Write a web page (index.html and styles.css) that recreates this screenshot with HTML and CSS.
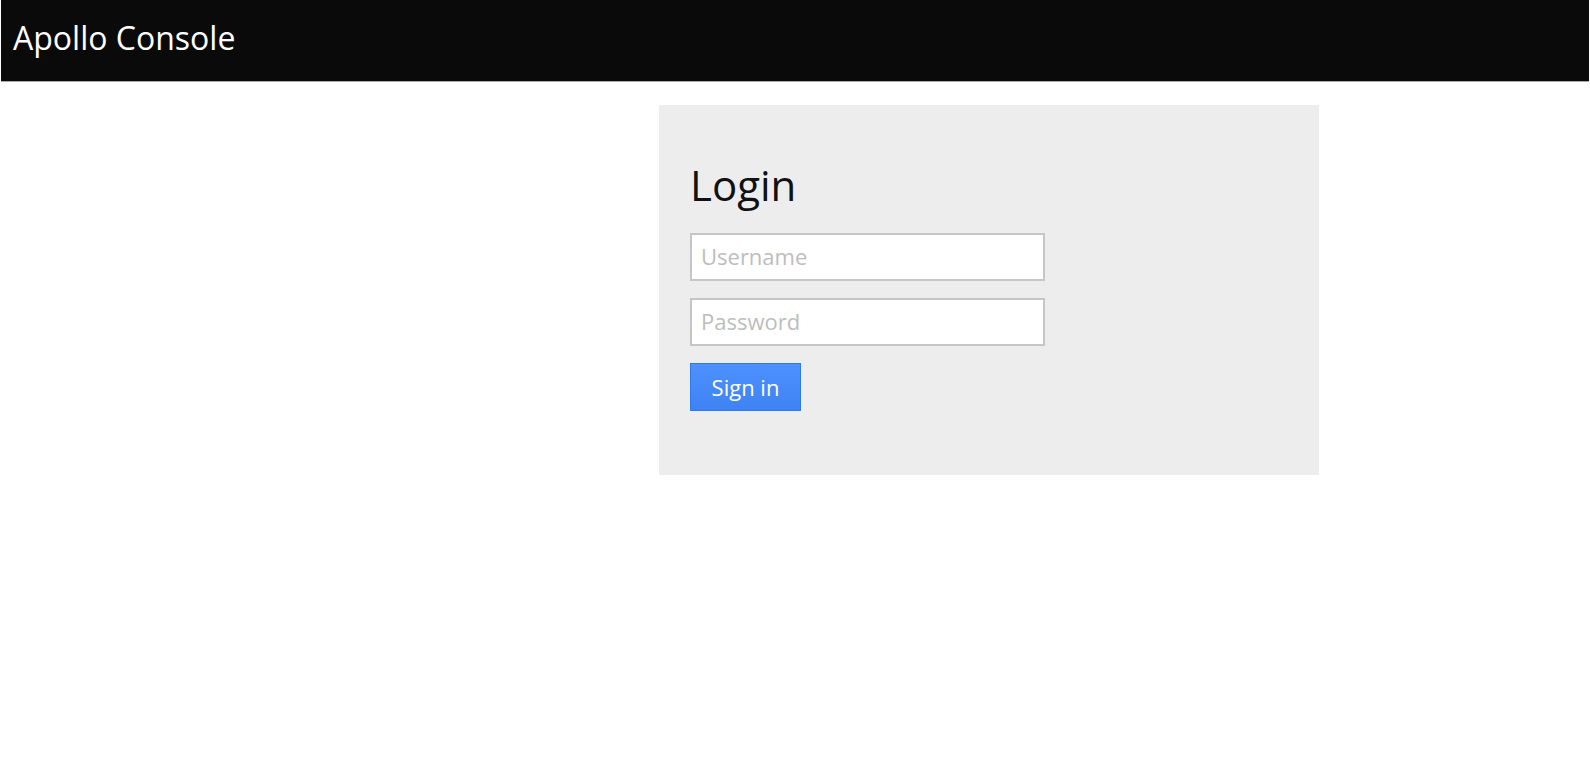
FILE: index.html
```html
<!DOCTYPE html>
<html lang="en">
<head>
<meta charset="utf-8">
<title>Apollo Console</title>
<link rel="stylesheet" href="styles.css">
</head>
<body>
<header class="topbar">
  <span class="brand">Apollo Console</span>
</header>
<main class="page">
  <section class="login-card">
    <h1 class="login-title">Login</h1>
    <form class="login-form">
      <input class="field" type="text" placeholder="Username">
      <input class="field" type="password" placeholder="Password">
      <button class="btn-signin" type="button">Sign in</button>
    </form>
  </section>
</main>
</body>
</html>
```

FILE: styles.css
```css
* { box-sizing: border-box; }

html, body {
  margin: 0;
  padding: 0;
  background: #ffffff;
  font-family: "Open Sans", "Liberation Sans", sans-serif;
}

.topbar {
  margin: 0 1px;
  height: 82px;
  background: #0a0a0a;
  border-bottom: 1px solid #a9a9a9;
  padding: 16px 0 0 12px;
}

.brand {
  display: block;
  color: #ffffff;
  font-size: 32px;
  line-height: 44px;
}

.page {
  padding: 23px 0 0 659px;
}

.login-card {
  width: 660px;
  height: 370px;
  background: #ededed;
  padding: 56px 31px 0 31px;
}

.login-title {
  margin: 0 0 24px 0;
  font-size: 42px;
  font-weight: 400;
  line-height: 48px;
  color: #111111;
}

.login-form {
  display: flex;
  flex-direction: column;
  align-items: flex-start;
  gap: 17px;
}

.field {
  width: 355px;
  height: 48px;
  margin: 0;
  border: 2px solid #c6c6c6;
  background: #ffffff;
  padding: 0 9px 2px 9px;
  font-family: "Open Sans", "Liberation Sans", sans-serif;
  font-size: 22px;
  color: #333;
  outline: none;
}

.field::placeholder {
  color: #bdbdbd;
}

.btn-signin {
  width: 111px;
  height: 48px;
  margin: 0;
  padding: 0;
  border: 1px solid #3079ed;
  background: linear-gradient(#4d90fe, #3f83f3);
  color: #ffffff;
  font-family: "Open Sans", "Liberation Sans", sans-serif;
  font-size: 22px;
  line-height: 1;
  cursor: pointer;
}
```
